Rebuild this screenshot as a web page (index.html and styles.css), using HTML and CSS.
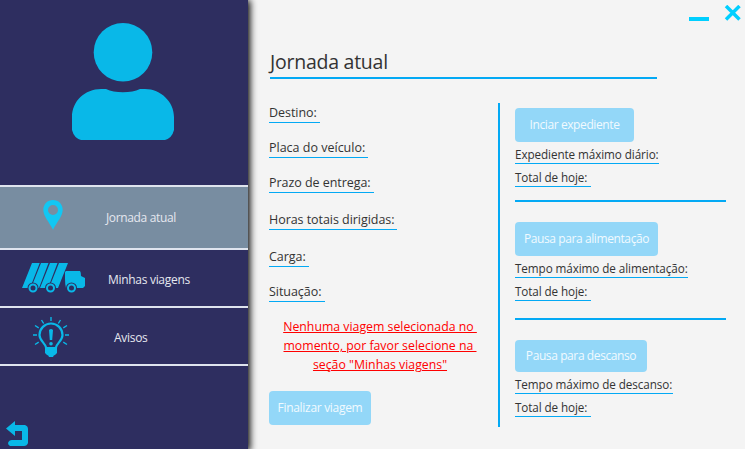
FILE: index.html
```html
<!DOCTYPE html>
<html lang="pt-BR">
<head>
<meta charset="utf-8">
<title>Jornada atual</title>
<link rel="stylesheet" href="styles.css">
</head>
<body>
<div class="window">
  <aside class="sidebar">
    <div class="profile">
      <svg width="102" height="118" viewBox="0 0 102 118"><circle cx="51" cy="29.3" r="29.3"/><path d="M0 94C0 78 13 66 29 66H34Q41 69.300 51 69.300Q61 69.300 68 66H73C89 66 102 79 102 94V107Q100 115 93 117H9Q2 115 0 107Z"/></svg>
    </div>
    <nav class="menu">
      <a class="item active">
        <svg class="pin" width="20" height="30" viewBox="0 0 20 30"><path fill-rule="evenodd" d="M10 0C4.500 0 .3 4.200.3 9.800C.3 16 6 22 10 29.700C14 22 19.700 16 19.700 9.800C19.700 4.200 15.500 0 10 0ZM10 5A5 5 0 1 1 10 15A5 5 0 1 1 10 5Z"/></svg>
        <span class="name n1">Jornada atual</span>
      </a>
      <a class="item">
        <svg class="truck" width="63" height="30" viewBox="0 0 63 30"><path d="M10 0H17.700L8 25H0ZM19 0H26.500L17 25H9ZM28 0H35.500L26 25H18ZM37 0H46L36 25H27ZM44 8H58Q59 9 59 13L63 15V23L61 25H44Q43 22 43 16V9Z"/><g class="wheel"><circle cx="11" cy="25" r="3.500"/><circle cx="28.500" cy="25" r="3.500"/><circle cx="49.500" cy="25" r="3.500"/></g><g class="rim"><circle cx="11" cy="25" r="3.500"/><circle cx="28.500" cy="25" r="3.500"/><circle cx="49.500" cy="25" r="3.500"/></g></svg>
        <span class="name n2">Minhas viagens</span>
      </a>
      <a class="item">
        <svg class="bulb" width="36" height="41" viewBox="0 0 36 41"><path class="line" d="M13.200 31C12.500 26 6.500 24 6.500 18A11.500 11.500 0 0 1 29.500 18C29.500 24 23.500 26 22.800 31Z"/><path d="M12 31H24V36L22 38Q20.500 38 20 40H16Q15.500 38 14 38L12 36ZM16 13Q18 11 20 13L19.200 23H16.800Z"/><circle cx="18" cy="26.800" r="1.800"/><path class="ray" d="M18 0V4M8.500 3L10.700 6.500M27.500 3L25.300 6.500M2 8.500L5.700 10.800M34 8.500L30.300 10.800M0 18H4M32 18H36M2 27.500L5.700 25.200M34 27.500L30.300 25.200"/></svg>
        <span class="name n3">Avisos</span>
      </a>
    </nav>
    <svg class="back" width="22" height="26" viewBox="0 0 22 26"><path d="M0 7.500L9 0V4H19Q22 5 22 8V22Q21 25 18 25H4Q2 24 2 22Q3 19 6 19H16V10H9V15Z"/></svg>
  </aside>
  <main class="content">
    <div class="controls">
      <svg width="53" height="17" viewBox="0 0 53 17"><path d="M0 12H20V16H0Z"/><path class="x" d="M37 1L50.500 14.500M50.500 1L37 14.500"/></svg>
    </div>
    <h1><span>Jornada atual</span></h1>
    <div class="columns">
      <section class="trip">
        <div class="field destino">Destino:</div>
        <div class="field placa">Placa do veículo:</div>
        <div class="field prazo">Prazo de entrega:</div>
        <div class="field horas">Horas totais dirigidas:</div>
        <div class="field carga">Carga:</div>
        <div class="field situacao">Situação:</div>
        <p class="warning">Nenhuma viagem selecionada no&nbsp;<br>momento, por favor selecione na&nbsp;<br>seção "Minhas viagens"</p>
        <button class="finish">Finalizar viagem</button>
      </section>
      <section class="times">
        <div class="block">
          <button class="b1">Inciar expediente</button>
          <div class="stat s1">Expediente máximo diário:</div>
          <div class="stat total">Total de hoje:</div>
        </div>
        <div class="block">
          <button class="b2">Pausa para alimentação</button>
          <div class="stat s2">Tempo máximo de alimentação:</div>
          <div class="stat total">Total de hoje:</div>
        </div>
        <div class="block">
          <button class="b3">Pausa para descanso</button>
          <div class="stat s3">Tempo máximo de descanso:</div>
          <div class="stat total">Total de hoje:</div>
        </div>
      </section>
    </div>
  </main>
</div>
</body>
</html>
```

FILE: styles.css
```css
* { box-sizing: border-box; }
body { margin: 0; background: #f4f4f4; font-family: "Open Sans", "Noto Sans", sans-serif; color: #333; }
svg { display: block; flex: none; fill: #09b8e8; }
.window { display: flex; width: 745px; height: 449px; overflow: hidden; }
.sidebar { display: flex; flex-direction: column; flex: none; width: 248px; background: #2e2e60; box-shadow: 1px 1px 7px 1px #000; }
.profile { height: 185px; padding: 23px 0 0 72px; }
.menu { border-bottom: 2px solid #dfe4ee; }
.item { display: flex; align-items: center; height: 58px; border-top: 2px solid #dfe4ee; }
.item.active { height: 63px; background: #788da1; }
.active svg { fill: #12c7f3; }
.pin { margin: -5px 43px 0 43px; }
.truck { margin: -1px 23px 0 22px; }
.bulb { margin: 2px 45px 0 33px; }
.name { color: #e5e7ef; font-size: 12px; line-height: 18px; letter-spacing: -0.3px; white-space: nowrap; }
.n1 { letter-spacing: -0.35px; padding-top: 1px; }
.n2, .n3 { padding-top: 3px; }
.wheel { stroke: #2e2e60; stroke-width: 4; }
.rim { fill: #2e2e60; stroke: #09b8e8; stroke-width: 2; }
.line { fill: none; stroke: #09b8e8; stroke-width: 2.2; }
.ray { stroke: #09b8e8; stroke-width: 1.4; }
.back { margin: auto 0 2px 6px; }
.content { flex: 1; padding-left: 21px; }
.controls { height: 44px; padding: 5px 0 0 420px; }
.controls svg { fill: #00cfff; }
.x { stroke: #00cfff; stroke-width: 3.5; }
h1 { margin: 0 0 24px 1px; width: 387px; height: 35px; border-bottom: 2px solid #03a9f4; font-size: 19.5px; line-height: 36px; letter-spacing: -0.25px; font-weight: 400; white-space: nowrap; }
.columns { display: flex; height: 324px; }
.trip { width: 229px; margin-top: -1px; }
.field, .stat { border-bottom: 1px solid #03a9f4; white-space: nowrap; }
.field { height: 21px; margin-bottom: 14px; font-size: 12.5px; line-height: 22px; letter-spacing: -0.05px; }
.destino { width: 51px; }
.placa { width: 99px; letter-spacing: 0; }
.prazo { width: 105px; margin-bottom: 16px; }
.horas { width: 128px; margin-bottom: 16px; }
.carga { width: 40px; }
.situacao { width: 56px; margin-bottom: 15px; }
.warning { margin: 0 0 17px; width: 222px; text-align: center; color: #f00; font-size: 12.3px; line-height: 19px; text-decoration: underline; text-decoration-thickness: 1px; text-underline-offset: 1px; white-space: nowrap; }
button { display: block; border: 0; border-radius: 4px; padding: 0; height: 34px; background: #93d7f8; color: #f1faff; font: 12px/34px "Open Sans", "Noto Sans", sans-serif; letter-spacing: -0.4px; white-space: nowrap; }
.finish { width: 102px; letter-spacing: -0.3px; }
.times { border-left: 2px solid #03a9f4; padding: 5px 0 0 15px; }
.block { width: 211px; height: 94px; border-bottom: 2px solid #03a9f4; margin-bottom: 20px; }
.block:nth-child(2) { height: 98px; }
.block:last-child { border: 0; margin: 0; }
.b1 { width: 119px; margin-bottom: 3px; }
.b2 { width: 143px; margin-bottom: 3px; }
.b3 { width: 132px; height: 32px; line-height: 32px; margin-bottom: 3px; }
.stat { height: 19px; font-size: 11.7px; line-height: 19px; letter-spacing: -0.08px; margin-bottom: 4px; }
.s1 { width: 144px; }
.s2 { width: 173px; }
.s3 { width: 158px; }
.total { width: 76px; letter-spacing: -0.1px; }
```
